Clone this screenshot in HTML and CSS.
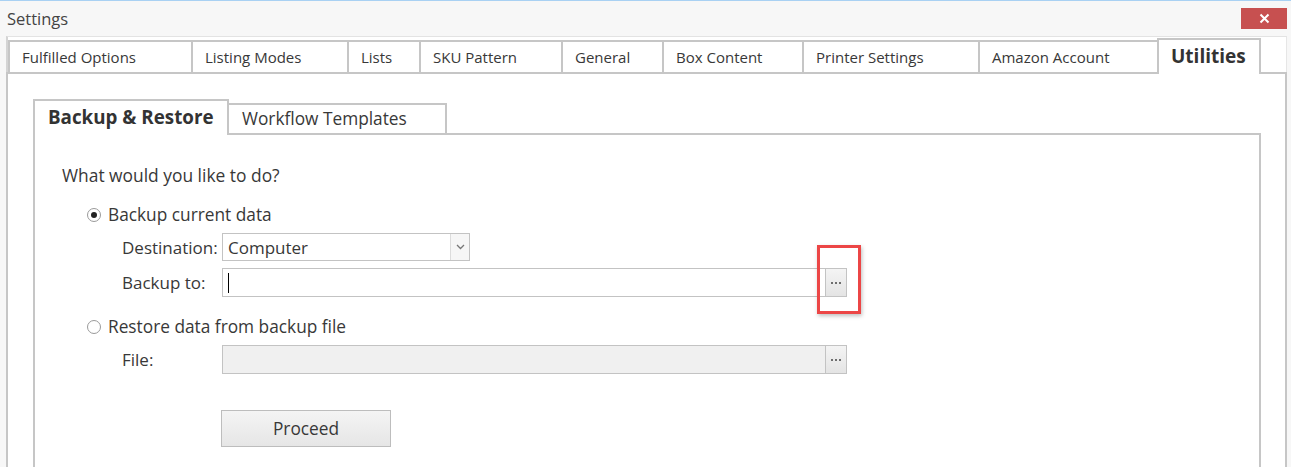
FILE: index.html
```html
<!DOCTYPE html>
<html lang="en">

<head>
    <meta charset="UTF-8">
    <meta name="viewport" content="width=device-width, initial-scale=1.0">
    <title>Settings</title>
    <link rel="stylesheet" href="styles.css">
</head>

<body>
    <div class="window">
        <div class="titlebar">
            <span class="title">Settings</span>
            <button class="close" aria-label="Close">
                <svg width="11" height="11" viewBox="0 0 11 11">
                    <path d="M1.5 1.5 L9.5 9.5 M9.5 1.5 L1.5 9.5" stroke="#fff" stroke-width="2" fill="none"/>
                </svg>
            </button>
        </div>

        <div class="frame">
            <div class="tabs">
                <div class="tab tab-fulfilled">Fulfilled Options</div>
                <div class="tab tab-listing">Listing Modes</div>
                <div class="tab tab-lists">Lists</div>
                <div class="tab tab-sku">SKU Pattern</div>
                <div class="tab tab-general">General</div>
                <div class="tab tab-box">Box Content</div>
                <div class="tab tab-printer">Printer Settings</div>
                <div class="tab tab-amazon">Amazon Account</div>
                <div class="tab tab-utilities active">Utilities</div>
            </div>

            <div class="panel">
                <div class="subtabs">
                    <div class="subtab subtab-backup active">Backup &amp; Restore</div>
                    <div class="subtab subtab-workflow">Workflow Templates</div>
                </div>

                <div class="subpanel">
                    <p class="question">What would you like to do?</p>

                    <div class="option option-backup">
                        <span class="radio checked"></span>
                        <span>Backup current data</span>
                    </div>

                    <div class="field-row row-destination">
                        <span class="field-label">Destination:</span>
                        <div class="select">
                            <span class="select-value">Computer</span>
                            <span class="select-arrow">
                                <svg width="9" height="6" viewBox="0 0 9 6">
                                    <path d="M1 1 L4.5 4.5 L8 1" stroke="#777" stroke-width="1.3" fill="none"/>
                                </svg>
                            </span>
                        </div>
                    </div>

                    <div class="field-row row-backup-to">
                        <span class="field-label">Backup to:</span>
                        <div class="path-input">
                            <span class="caret"></span>
                            <span class="browse"><i></i><i></i><i></i></span>
                        </div>
                    </div>

                    <div class="option option-restore">
                        <span class="radio"></span>
                        <span>Restore data from backup file</span>
                    </div>

                    <div class="field-row row-file">
                        <span class="field-label">File:</span>
                        <div class="path-input disabled">
                            <span class="browse"><i></i><i></i><i></i></span>
                        </div>
                    </div>

                    <button class="proceed">Proceed</button>
                </div>
            </div>
        </div>

        <div class="highlight"></div>
    </div>
</body>

</html>
```

FILE: styles.css
```css
:root {
    --text-color: #383838;
    --border-color: #c6c6c6;
    --field-border: #c3c3c3;
    --title-bg: #f7f7f7;
}

* {
    margin: 0;
    padding: 0;
    box-sizing: border-box;
}

body {
    font-family: 'Open Sans', 'Noto Sans', sans-serif;
    color: var(--text-color);
    background-color: #fff;
}

.window {
    position: relative;
    width: 1291px;
    height: 467px;
    overflow: hidden;
    border-top: 1px solid #a9d1f3;
    background-color: var(--title-bg);
}

/* Title bar */
.titlebar {
    display: flex;
    justify-content: space-between;
    align-items: flex-start;
    height: 35px;
    padding-left: 7px;
}

.title {
    font-size: 16.5px;
    line-height: 22px;
    margin-top: 7px;
    color: #444;
}

.close {
    width: 46px;
    height: 21px;
    margin-top: 7px;
    margin-right: 4px;
    border: none;
    background-color: #c75050;
    display: flex;
    align-items: center;
    justify-content: center;
}

/* Outer frame with main tabs */
.frame {
    margin-left: 6px;
    width: 1281px;
    height: 431px;
    border-top: 1px solid #e3e3e3;
    border-left: 2px solid #d4d4d4;
    border-right: 1px solid #e6e6e6;
    padding-top: 3px;
    background-color: #fff;
    display: flex;
    flex-direction: column;
}

.tabs {
    display: flex;
    align-items: flex-end;
    height: 32px;
    position: relative;
    z-index: 1;
}

.tab {
    height: 32px;
    border-top: 2px solid var(--border-color);
    border-left: 2px solid var(--border-color);
    background-color: #fff;
    font-size: 15px;
    line-height: 30px;
    padding-left: 12px;
    white-space: nowrap;
}

.tab-fulfilled { width: 183px; }
.tab-listing { width: 156px; }
.tab-lists { width: 72px; }
.tab-sku { width: 142px; }
.tab-general { width: 101px; }
.tab-box { width: 140px; }
.tab-printer { width: 176px; }
.tab-amazon { width: 179px; }

.tab.active {
    width: 104px;
    height: 36px;
    margin-bottom: -2px;
    border-right: 2px solid var(--border-color);
    font-size: 19px;
    font-weight: 700;
    line-height: 33px;
    padding-left: 12px;
    color: #333;
}

.panel {
    flex: 1;
    margin-left: -2px;
    margin-right: -1px;
    border: 2px solid var(--border-color);
    border-bottom: none;
    padding: 25px 24px 0 25px;
    display: flex;
    flex-direction: column;
}

/* Inner tabs */
.subtabs {
    display: flex;
    align-items: flex-end;
    height: 34px;
    position: relative;
    z-index: 1;
}

.subtab {
    height: 30px;
    border-top: 2px solid var(--border-color);
    border-right: 2px solid var(--border-color);
    background-color: #fff;
    font-size: 17.3px;
    line-height: 28px;
    padding-left: 13px;
    white-space: nowrap;
}

.subtab.active {
    width: 196px;
    height: 36px;
    margin-bottom: -2px;
    border-left: 2px solid var(--border-color);
    font-size: 18.8px;
    font-weight: 700;
    line-height: 33px;
    padding-left: 13px;
    color: #333;
}

.subtab-workflow { width: 218px; }

.subpanel {
    flex: 1;
    border: 2px solid var(--border-color);
    border-bottom: none;
    padding: 30px 0 0 27px;
    display: flex;
    flex-direction: column;
    align-items: flex-start;
}

.question {
    font-size: 17.4px;
    line-height: 20px;
}

/* Radio options */
.option {
    display: flex;
    align-items: center;
    gap: 7px;
    margin-left: 25px;
    font-size: 17.3px;
    line-height: 20px;
}

.option-backup { margin-top: 20px; }
.option-restore { margin-top: 20px; }

.radio {
    width: 14px;
    height: 14px;
    border-radius: 50%;
    border: 1px solid #9a9a9a;
    background-color: #fff;
    display: flex;
    align-items: center;
    justify-content: center;
}

.radio.checked::after {
    content: '';
    width: 6px;
    height: 6px;
    border-radius: 50%;
    background-color: #222;
}

/* Field rows */
.field-row {
    display: flex;
    align-items: center;
    padding-left: 60px;
    font-size: 17px;
}

.field-label {
    width: 100px;
}

.row-destination { margin-top: 8px; }
.row-backup-to { margin-top: 7px; }
.row-file { margin-top: 8px; }

.select {
    width: 248px;
    height: 28px;
    border: 1px solid var(--field-border);
    background-color: #fff;
    display: flex;
    align-items: center;
}

.select-value {
    flex: 1;
    padding-left: 5px;
}

.select-arrow {
    width: 19px;
    height: 100%;
    border-left: 1px solid #dcdcdc;
    background-color: #f6f6f6;
    display: flex;
    align-items: center;
    justify-content: center;
}

.path-input {
    width: 625px;
    height: 29px;
    border: 1px solid var(--field-border);
    background-color: #fff;
    display: flex;
    align-items: center;
    justify-content: space-between;
}

.path-input.disabled {
    background-color: #f0f0f0;
}

.caret {
    width: 1px;
    height: 20px;
    margin-left: 5px;
    background-color: #000;
}

.browse {
    width: 21px;
    height: 100%;
    margin-left: auto;
    border-left: 1px solid var(--field-border);
    background: linear-gradient(#f4f4f4, #e4e4e4);
    display: flex;
    align-items: center;
    justify-content: center;
    gap: 2px;
}

.browse i {
    width: 2px;
    height: 2px;
    background-color: #6e6e6e;
}

.proceed {
    margin-top: 36px;
    margin-left: 159px;
    width: 170px;
    height: 37px;
    border: 1px solid #bdbdbd;
    background: linear-gradient(#f4f4f4, #e6e6e6);
    font-family: inherit;
    font-size: 17.3px;
    color: var(--text-color);
}

/* Annotation box drawn over the browse button */
.highlight {
    position: absolute;
    left: 817px;
    top: 244px;
    width: 44px;
    height: 69px;
    border: 3px solid #ec4646;
    box-shadow: 1px 2px 4px rgba(0, 0, 0, 0.25);
}
```
